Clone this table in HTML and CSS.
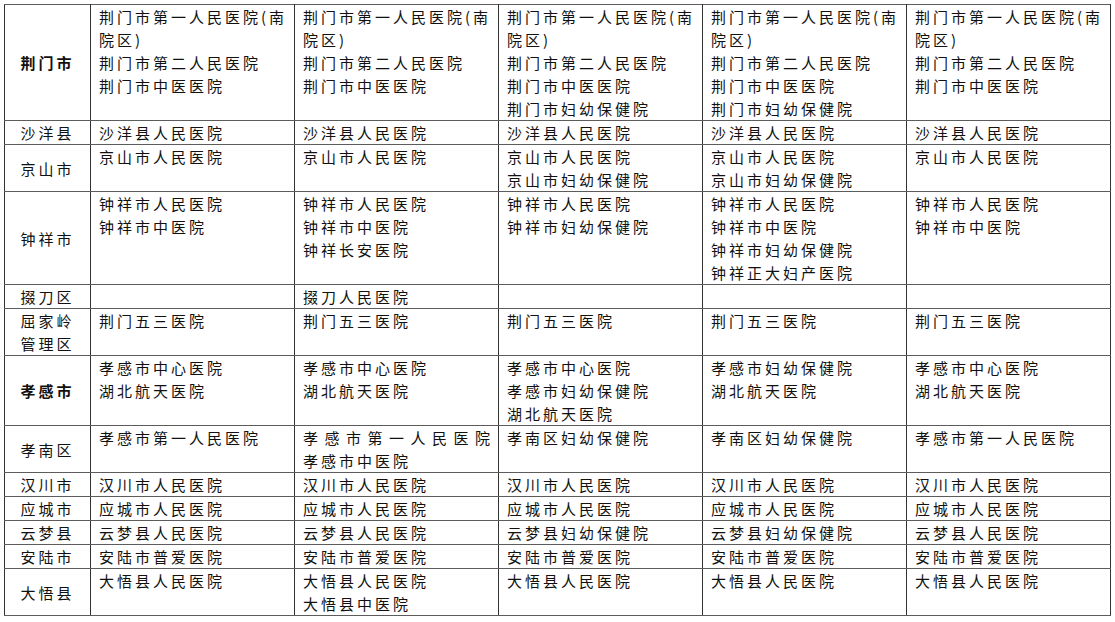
FILE: index.html
```html
<!DOCTYPE html>
<html lang="zh-CN">
<head>
<meta charset="utf-8">
<title>医院名单</title>
<link rel="stylesheet" href="styles.css">
</head>
<body>
<table class="list">
<colgroup>
<col class="c-area"><col class="c-h"><col class="c-h"><col class="c-h"><col class="c-h"><col class="c-h">
</colgroup>
<tbody>
<tr>
<th class="strong">荆门市</th>
<td><div>荆门市第一人民医院(南<br>院区)</div><div>荆门市第二人民医院</div><div>荆门市中医医院</div></td>
<td><div>荆门市第一人民医院(南<br>院区)</div><div>荆门市第二人民医院</div><div>荆门市中医医院</div></td>
<td><div>荆门市第一人民医院(南<br>院区)</div><div>荆门市第二人民医院</div><div>荆门市中医医院</div><div>荆门市妇幼保健院</div></td>
<td><div>荆门市第一人民医院(南<br>院区)</div><div>荆门市第二人民医院</div><div>荆门市中医医院</div><div>荆门市妇幼保健院</div></td>
<td><div>荆门市第一人民医院(南<br>院区)</div><div>荆门市第二人民医院</div><div>荆门市中医医院</div></td>
</tr>
<tr>
<th>沙洋县</th>
<td><div>沙洋县人民医院</div></td>
<td><div>沙洋县人民医院</div></td>
<td><div>沙洋县人民医院</div></td>
<td><div>沙洋县人民医院</div></td>
<td><div>沙洋县人民医院</div></td>
</tr>
<tr>
<th>京山市</th>
<td><div>京山市人民医院</div></td>
<td><div>京山市人民医院</div></td>
<td><div>京山市人民医院</div><div>京山市妇幼保健院</div></td>
<td><div>京山市人民医院</div><div>京山市妇幼保健院</div></td>
<td><div>京山市人民医院</div></td>
</tr>
<tr>
<th>钟祥市</th>
<td><div>钟祥市人民医院</div><div>钟祥市中医院</div></td>
<td><div>钟祥市人民医院</div><div>钟祥市中医院</div><div>钟祥长安医院</div></td>
<td><div>钟祥市人民医院</div><div>钟祥市妇幼保健院</div></td>
<td><div>钟祥市人民医院</div><div>钟祥市中医院</div><div>钟祥市妇幼保健院</div><div>钟祥正大妇产医院</div></td>
<td><div>钟祥市人民医院</div><div>钟祥市中医院</div></td>
</tr>
<tr>
<th>掇刀区</th>
<td></td>
<td><div>掇刀人民医院</div></td>
<td></td>
<td></td>
<td></td>
</tr>
<tr>
<th>屈家岭<br>管理区</th>
<td><div>荆门五三医院</div></td>
<td><div>荆门五三医院</div></td>
<td><div>荆门五三医院</div></td>
<td><div>荆门五三医院</div></td>
<td><div>荆门五三医院</div></td>
</tr>
<tr>
<th class="strong">孝感市</th>
<td><div>孝感市中心医院</div><div>湖北航天医院</div></td>
<td><div>孝感市中心医院</div><div>湖北航天医院</div></td>
<td><div>孝感市中心医院</div><div>孝感市妇幼保健院</div><div>湖北航天医院</div></td>
<td><div>孝感市妇幼保健院</div><div>湖北航天医院</div></td>
<td><div>孝感市中心医院</div><div>湖北航天医院</div></td>
</tr>
<tr>
<th>孝南区</th>
<td><div>孝感市第一人民医院</div></td>
<td><div class="spread">孝感市第一人民医院</div><div>孝感市中医院</div></td>
<td><div>孝南区妇幼保健院</div></td>
<td><div>孝南区妇幼保健院</div></td>
<td><div>孝感市第一人民医院</div></td>
</tr>
<tr>
<th>汉川市</th>
<td><div>汉川市人民医院</div></td>
<td><div>汉川市人民医院</div></td>
<td><div>汉川市人民医院</div></td>
<td><div>汉川市人民医院</div></td>
<td><div>汉川市人民医院</div></td>
</tr>
<tr>
<th>应城市</th>
<td><div>应城市人民医院</div></td>
<td><div>应城市人民医院</div></td>
<td><div>应城市人民医院</div></td>
<td><div>应城市人民医院</div></td>
<td><div>应城市人民医院</div></td>
</tr>
<tr>
<th>云梦县</th>
<td><div>云梦县人民医院</div></td>
<td><div>云梦县人民医院</div></td>
<td><div>云梦县妇幼保健院</div></td>
<td><div>云梦县妇幼保健院</div></td>
<td><div>云梦县人民医院</div></td>
</tr>
<tr>
<th>安陆市</th>
<td><div>安陆市普爱医院</div></td>
<td><div>安陆市普爱医院</div></td>
<td><div>安陆市普爱医院</div></td>
<td><div>安陆市普爱医院</div></td>
<td><div>安陆市普爱医院</div></td>
</tr>
<tr>
<th>大悟县</th>
<td><div>大悟县人民医院</div></td>
<td><div>大悟县人民医院</div><div>大悟县中医院</div></td>
<td><div>大悟县人民医院</div></td>
<td><div>大悟县人民医院</div></td>
<td><div>大悟县人民医院</div></td>
</tr>
</tbody>
</table>
</body>
</html>
```

FILE: styles.css
```css
html, body {
  background: #ffffff;
}

body {
  margin: 4px 0 0 4px;
  font-family: "Noto Sans CJK SC", "Noto Sans CJK TC", sans-serif;
  font-size: 15px;
  line-height: 23px;
  color: #111111;
}

.list {
  border-collapse: collapse;
  table-layout: fixed;
  width: 1105px;
}

.c-area {
  width: 86px;
}

.c-h {
  width: 204px;
}

.list th,
.list td {
  border-top: 1px solid #5c5c5c;
  border-bottom: 1px solid #5c5c5c;
  border-left: 1px solid #333333;
  border-right: 1px solid #333333;
  padding: 0;
  letter-spacing: 3px;
  white-space: nowrap;
}

.list th {
  font-weight: 400;
  text-align: center;
  vertical-align: middle;
}

.list th.strong {
  font-weight: 700;
}

.list td {
  vertical-align: top;
  text-align: left;
  padding: 0 3px 0 8px;
}

.spread {
  text-align: justify;
  text-align-last: justify;
  text-justify: inter-character;
  margin-right: 2px;
}
```
